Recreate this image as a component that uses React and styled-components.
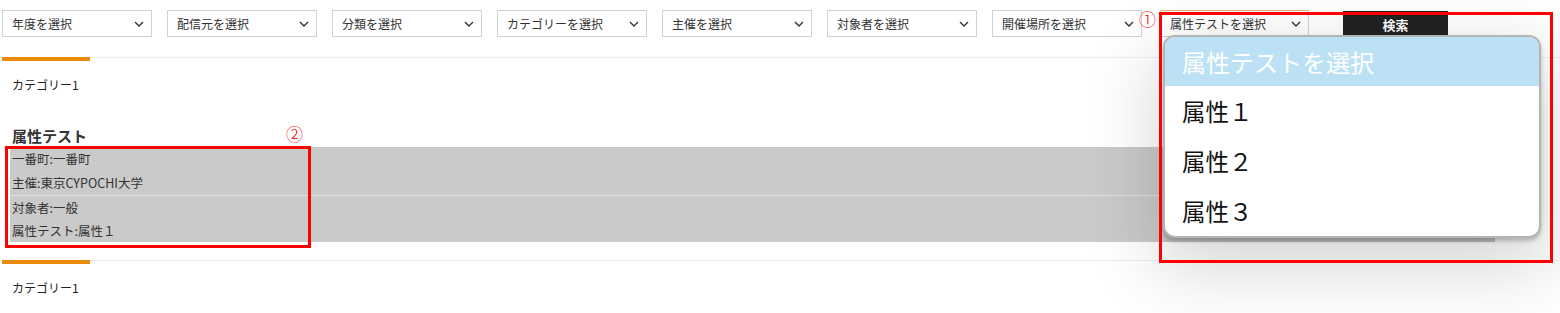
import React from "react";
import styled, { createGlobalStyle } from "styled-components";

const GlobalStyle = createGlobalStyle`
  html, body {
    margin: 0;
    padding: 0;
    background: #fff;
    font-family: "Noto Sans CJK JP", "Noto Sans", sans-serif;
    color: #333;
  }
`;

const filters = [
  "年度を選択",
  "配信元を選択",
  "分類を選択",
  "カテゴリーを選択",
  "主催を選択",
  "対象者を選択",
  "開催場所を選択",
];

const details = [
  ["一番町:一番町", "主催:東京CYPOCHI大学"],
  ["対象者:一般", "属性テスト:属性１"],
];

const options = ["属性１", "属性２", "属性３"];

const Page = styled.div`
  position: relative;
  width: 1560px;
  height: 313px;
  overflow: hidden;
`;

const Toolbar = styled.div`
  display: flex;
  align-items: flex-start;
  gap: 15px;
  padding: 10px 0 0 2px;
  height: 57px;
  box-sizing: border-box;
`;

const Select = styled.div`
  display: flex;
  align-items: center;
  justify-content: space-between;
  width: ${(p) => (p.$narrow ? "149px" : "150px")};
  height: 27px;
  box-sizing: border-box;
  padding: 0 7px 0 9px;
  margin-left: ${(p) => (p.$narrow ? "3px" : "0")};
  border: 1px solid #d2d2d2;
  border-top-color: ${(p) => (p.$active ? "#d9b570" : "#d2d2d2")};
  background: #fff;
  font-size: 12px;
  color: #333;
`;

const SearchButton = styled.div`
  display: flex;
  align-items: center;
  justify-content: center;
  width: 105px;
  height: 26px;
  margin: 1px 0 0 19px;
  background: #222;
  color: #fff;
  font-size: 13px;
  font-weight: bold;
`;

const Chevron = () => (
  <svg width="10" height="6" viewBox="0 0 10 6">
    <polyline
      points="1,1 5,5 9,1"
      fill="none"
      stroke="#333"
      strokeWidth="1.4"
    />
  </svg>
);

const CategoryBar = styled.div`
  border-top: 1px solid #eeeeee;
  height: ${(p) => p.$h}px;
  box-sizing: border-box;
`;

const OrangeTab = styled.div`
  width: 88px;
  height: 4px;
  margin: -1px 0 0 2px;
  background: #ea8a0d;
`;

const CategoryLabel = styled.div`
  margin: 16px 0 0 12px;
  font-size: 12px;
  line-height: 16px;
  color: #222;
`;

const Heading = styled.div`
  margin: 16px 0 0 12px;
  font-size: 15px;
  font-weight: bold;
  line-height: 22px;
  color: #333;
`;

const DetailBox = styled.div`
  width: 1485px;
  margin: 0 0 18px 10px;
  background: #cacaca;
`;

const DetailRow = styled.div`
  padding-left: 2px;
  border-top: ${(p) => (p.$first ? "none" : "1px solid #e2e2e2")};
`;

const DetailLine = styled.div`
  font-size: 12.5px;
  line-height: 24px;
  height: ${(p) => (p.$short ? "23px" : "24px")};
  color: #333;
`;

const Dropdown = styled.div`
  position: absolute;
  left: 1163px;
  top: 35px;
  width: 378px;
  height: 203px;
  box-sizing: border-box;
  border: 2px solid #b4b4b4;
  border-radius: 12px;
  background: #fff;
  overflow: hidden;
  box-shadow: 0 3px 4px rgba(0, 0, 0, 0.22), 0 24px 70px 8px rgba(0, 0, 0, 0.16);
`;

const DropdownHeader = styled.div`
  height: 49px;
  padding-left: 17px;
  display: flex;
  align-items: center;
  background: #bde1f4;
  color: #fff;
  font-size: 24px;
`;

const Option = styled.div`
  height: 50px;
  padding-left: 17px;
  display: flex;
  align-items: center;
  font-size: 23.5px;
  color: #111;
`;

const RedFrame = styled.div`
  position: absolute;
  left: ${(p) => p.$x}px;
  top: ${(p) => p.$y}px;
  width: ${(p) => p.$w}px;
  height: ${(p) => p.$h}px;
  box-sizing: border-box;
  border: 3px solid #ff0000;
`;

const Marker = styled.div`
  position: absolute;
  left: ${(p) => p.$x}px;
  top: ${(p) => p.$y}px;
  font-size: 17px;
  line-height: 18px;
  font-weight: 300;
  color: #ff0000;
  font-family: "Noto Sans CJK JP", sans-serif;
`;

export default function App() {
  return (
    <Page>
      <GlobalStyle />
      <Toolbar>
        {filters.map((label) => (
          <Select key={label}>
            {label}
            <Chevron />
          </Select>
        ))}
        <Select $narrow $active>
          属性テストを選択
          <Chevron />
        </Select>
        <SearchButton>検索</SearchButton>
      </Toolbar>

      <CategoryBar $h={52}>
        <OrangeTab />
        <CategoryLabel>カテゴリー1</CategoryLabel>
      </CategoryBar>

      <Heading>属性テスト</Heading>
      <DetailBox>
        {details.map((row, i) => (
          <DetailRow key={i} $first={i === 0}>
            {row.map((line) => (
              <DetailLine key={line} $short={i > 0}>
                {line}
              </DetailLine>
            ))}
          </DetailRow>
        ))}
      </DetailBox>

      <CategoryBar $h={54}>
        <OrangeTab />
        <CategoryLabel>カテゴリー1</CategoryLabel>
      </CategoryBar>

      <Dropdown>
        <DropdownHeader>属性テストを選択</DropdownHeader>
        {options.map((o) => (
          <Option key={o}>{o}</Option>
        ))}
      </Dropdown>

      <RedFrame $x={1159} $y={12} $w={394} $h={251} />
      <Marker $x={1139} $y={10}>①</Marker>
      <RedFrame $x={5} $y={146} $w={306} $h={102} />
      <Marker $x={286} $y={125}>②</Marker>
    </Page>
  );
}
